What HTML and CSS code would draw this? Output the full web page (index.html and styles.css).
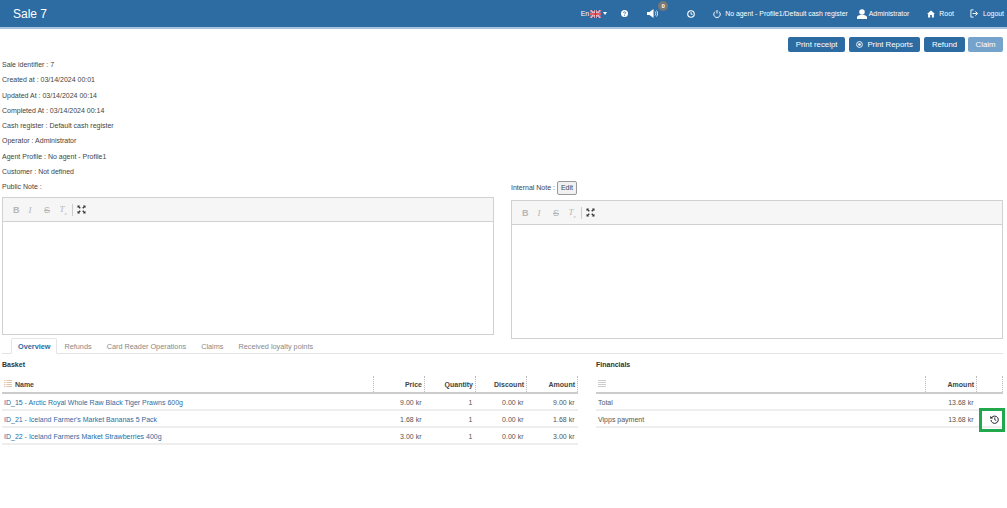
FILE: index.html
```html
<!DOCTYPE html>
<html>
<head>
  <meta charset="utf-8">
  <title>Sale 7</title>
  <link rel="stylesheet" href="styles.css">
</head>
<body>
  <div class="topbar">
    <div class="title">Sale 7</div>
    <div class="topnav">
      <span class="nav-lang">En
        <svg class="flag" width="11" height="8" viewBox="0 0 22 16"><rect width="22" height="16" fill="#2b3f8c"/><path d="M0 0L22 16M22 0L0 16" stroke="#fff" stroke-width="3.5"/><path d="M0 0L22 16M22 0L0 16" stroke="#d3263a" stroke-width="1.4"/><path d="M11 0V16M0 8H22" stroke="#fff" stroke-width="5"/><path d="M11 0V16M0 8H22" stroke="#d3263a" stroke-width="3"/></svg>
        <span class="caret"></span>
      </span>
      <svg class="nav-help" width="7" height="7" viewBox="0 0 16 16"><circle cx="8" cy="8" r="8" fill="#fff"/><path d="M5.2 6.2C5.4 3.6 10.8 3.600 10.8 6.400C10.8 8.2 8 8 8 10" fill="none" stroke="#2d6ca2" stroke-width="2"/><rect x="7" y="11" width="2" height="2" fill="#2d6ca2"/></svg>
      <span class="nav-sound">
        <svg width="11" height="9" viewBox="0 0 22 18"><path d="M0 6H5L13 0V18L5 12H0Z" fill="#fff"/><path d="M16 5C18 7 18 11 16 13M19 3C22 6 22 12 19 15" fill="none" stroke="#fff" stroke-width="1.6"/></svg>
        <span class="badge">0</span>
      </span>
      <svg class="nav-clock" width="8" height="8" viewBox="0 0 18 18"><circle cx="9" cy="9" r="7.4" fill="none" stroke="#fff" stroke-width="2.4"/><path d="M9 4.5V9.5H13" fill="none" stroke="#fff" stroke-width="2"/></svg>
      <span class="nav-item nav-agent">
        <svg width="8" height="8" viewBox="0 0 18 18"><path d="M5 3.5A7.3 7.3 0 1 0 13 3.5" fill="none" stroke="#fff" stroke-width="2.2"/><path d="M9 0V8" stroke="#fff" stroke-width="2.2"/></svg>
        No agent - Profile1/Default cash register
      </span>
      <span class="nav-item nav-user">
        <svg width="10" height="10" viewBox="0 0 20 20"><circle cx="10" cy="6" r="5.5" fill="#fff"/><path d="M0 20V16.5C0 13.5 4 12.5 6 12H14C16 12.5 20 13.5 20 16.5V20Z" fill="#fff"/></svg>
        Administrator
      </span>
      <span class="nav-item nav-root">
        <svg width="8" height="8" viewBox="0 0 18 16"><path d="M9 0L18 8H15.5V16H11V10.5H7V16H2.5V8H0Z" fill="#fff"/></svg>
        Root
      </span>
      <span class="nav-item nav-logout">
        <svg width="9" height="9" viewBox="0 0 20 20"><path d="M8 2H2V18H8" fill="none" stroke="#fff" stroke-width="2"/><path d="M6 10H15M12 5.5L17 10L12 14.500" fill="none" stroke="#fff" stroke-width="2.2"/></svg>
        Logout
      </span>
    </div>
  </div>

  <div class="actions">
    <button class="btn">Print receipt</button>
    <button class="btn btn-reports">
      <svg width="7" height="7" viewBox="0 0 14 14"><circle cx="7" cy="7" r="5.8" fill="none" stroke="#fff" stroke-width="1.8"/><circle cx="7" cy="7" r="2.6" fill="#fff"/></svg>
      Print Reports
    </button>
    <button class="btn">Refund</button>
    <button class="btn btn-disabled">Claim</button>
  </div>

  <div class="info">
    <p>Sale identifier : 7</p>
    <p>Created at : 03/14/2024 00:01</p>
    <p>Updated At : 03/14/2024 00:14</p>
    <p>Completed At : 03/14/2024 00:14</p>
    <p>Cash register : Default cash register</p>
    <p>Operator : Administrator</p>
    <p>Agent Profile : No agent - Profile1</p>
    <p>Customer : Not defined</p>
  </div>

  <div class="notes">
    <div class="note">
      <div class="note-label">Public Note :</div>
      <div class="editor">
        <div class="toolbar">
          <span class="tool tool-b">B</span>
          <span class="tool tool-i">I</span>
          <span class="tool tool-s">S</span>
          <span class="tool tool-x">T<sub>x</sub></span>
          <span class="tool-sep"></span>
          <svg width="9" height="9" viewBox="0 0 18 18"><path d="M1 1H6L4.500 2.500L7.500 5.500L5.500 7.500L2.500 4.500L1 6ZM17 1V6L15.500 4.500L12.500 7.500L10.500 5.500L13.500 2.500L12 1ZM1 17V12L2.500 13.500L5.500 10.500L7.500 12.500L4.500 15.500L6 17ZM17 17H12L13.500 15.500L10.500 12.500L12.500 10.500L15.500 13.500L17 12Z" fill="#333"/></svg>
        </div>
        <div class="editor-body editor-left"></div>
      </div>
    </div>
    <div class="note note-internal">
      <div class="note-label">Internal Note : <button class="btn-edit">Edit</button></div>
      <div class="editor">
        <div class="toolbar">
          <span class="tool tool-b">B</span>
          <span class="tool tool-i">I</span>
          <span class="tool tool-s">S</span>
          <span class="tool tool-x">T<sub>x</sub></span>
          <span class="tool-sep"></span>
          <svg width="9" height="9" viewBox="0 0 18 18"><path d="M1 1H6L4.500 2.500L7.500 5.500L5.500 7.500L2.500 4.500L1 6ZM17 1V6L15.500 4.500L12.500 7.500L10.500 5.500L13.500 2.500L12 1ZM1 17V12L2.500 13.500L5.500 10.500L7.500 12.500L4.500 15.500L6 17ZM17 17H12L13.500 15.500L10.500 12.500L12.500 10.500L15.500 13.500L17 12Z" fill="#333"/></svg>
        </div>
        <div class="editor-body"></div>
      </div>
    </div>
  </div>

  <div class="tabs">
    <span class="tab tab-active">Overview</span>
    <span class="tab">Refunds</span>
    <span class="tab">Card Reader Operations</span>
    <span class="tab">Claims</span>
    <span class="tab">Received loyalty points</span>
  </div>

  <div class="panels">
    <div class="basket">
      <div class="panel-title">Basket</div>
      <table>
        <colgroup><col><col class="c51"><col class="c51"><col class="c51"><col class="c51"></colgroup>
        <thead>
          <tr>
            <th class="left">
              <svg class="list-icon" width="8" height="7" viewBox="0 0 16 14"><path d="M0 1H3M5 1H16M0 5H3M5 5H16M0 9H3M5 9H16M0 13H3M5 13H16" stroke="#d8b08c" stroke-width="1.500"/></svg>
              Name
            </th>
            <th>Price</th><th>Quantity</th><th>Discount</th><th>Amount</th>
          </tr>
        </thead>
        <tbody>
          <tr><td class="left"><a href="#">ID_15 - Arctic Royal Whole Raw Black Tiger Prawns 600g</a></td><td>9.00 kr</td><td>1</td><td>0.00 kr</td><td>9.00 kr</td></tr>
          <tr><td class="left"><a href="#">ID_21 - Iceland Farmer's Market Bananas 5 Pack</a></td><td>1.68 kr</td><td>1</td><td>0.00 kr</td><td>1.68 kr</td></tr>
          <tr><td class="left"><a href="#">ID_22 - Iceland Farmers Market Strawberries 400g</a></td><td>3.00 kr</td><td>1</td><td>0.00 kr</td><td>3.00 kr</td></tr>
        </tbody>
      </table>
    </div>
    <div class="financials">
      <div class="panel-title">Financials</div>
      <table>
        <colgroup><col><col class="c51"><col class="c26"></colgroup>
        <thead>
          <tr>
            <th class="left">
              <svg class="list-icon" width="8" height="7" viewBox="0 0 16 14"><path d="M0 1H16M0 5H16M0 9H16M0 13H16" stroke="#bbb" stroke-width="1.500"/></svg>
            </th>
            <th>Amount</th><th></th>
          </tr>
        </thead>
        <tbody>
          <tr><td class="left">Total</td><td>13.68 kr</td><td></td></tr>
          <tr>
            <td class="left">Vipps payment</td><td>13.68 kr</td>
            <td class="action-cell">
              <span class="highlight"></span>
              <svg width="9" height="9" viewBox="0 0 18 18"><path d="M3.500 5A7.300 7.300 0 1 1 2 10" fill="none" stroke="#222" stroke-width="2"/><path d="M0.500 2L6.500 6.500L0.500 7.500Z" fill="#222"/><path d="M9.500 5V9.500L12.500 11" fill="none" stroke="#222" stroke-width="1.800"/></svg>
            </td>
          </tr>
        </tbody>
      </table>
    </div>
  </div>
</body>
</html>
```
FILE: styles.css
```css
* {
  box-sizing: border-box;
}
body {
  margin: 0;
  font-family: "Liberation Sans", Arial, sans-serif;
  font-size: 7px;
  color: #444;
  background-color: #fff;
}
.topbar {
  height: 29px;
  background-color: #2d6ca2;
  border-bottom: 2px solid #a9c4de;
  color: #fff;
  display: flex;
  align-items: center;
  justify-content: space-between;
  padding: 0 3px 0 13px;
}
.title {
  font-size: 12px;
}
.topnav {
  display: flex;
  align-items: center;
  font-size: 6.900px;
}
.nav-lang {
  display: flex;
  align-items: center;
  gap: 1px;
  margin-right: 14px;
}
.caret {
  border-top: 3px solid #fff;
  border-left: 2.500px solid transparent;
  border-right: 2.500px solid transparent;
  margin-left: 1px;
}
.nav-help {
  margin-right: 19px;
}
.nav-sound {
  position: relative;
  display: flex;
  margin-right: 29px;
}
.badge {
  position: absolute;
  top: -8px;
  left: 11px;
  width: 10px;
  height: 10px;
  line-height: 10px;
  border-radius: 50%;
  background-color: #777;
  font-size: 6px;
  font-weight: bold;
  text-align: center;
}
.nav-clock {
  margin-right: 18px;
}
.nav-item {
  display: flex;
  align-items: center;
}
.nav-item svg {
  margin-right: 4px;
}
.nav-agent {
  margin-right: 9px;
}
.nav-user svg {
  margin-right: 2px;
}
.nav-user {
  margin-right: 18px;
}
.nav-root {
  margin-right: 16px;
}
.actions {
  display: flex;
  justify-content: flex-end;
  gap: 4px;
  padding: 8px 4px 0 0;
}
.btn {
  height: 15px;
  padding: 0 8px;
  border: 0;
  border-radius: 2px;
  background-color: #2d6ca2;
  color: #fff;
  font-family: inherit;
  font-size: 7.800px;
  display: flex;
  align-items: center;
}
.btn-reports {
  padding: 0 7px;
}
.btn-reports svg {
  margin-right: 4px;
}
.btn-disabled {
  background-color: #76a3cb;
  margin-left: -1px;
  padding: 0 7.500px;
}
.info {
  padding: 4px 0 0 2px;
}
.info p {
  margin: 0;
  height: 15.300px;
  line-height: 15.300px;
}
.info p:first-child {
  margin-top: 1px;
}
.notes {
  display: flex;
  justify-content: space-between;
  padding: 0 4px 0 2px;
}
.note {
  width: 492px;
}
.note-label {
  height: 18px;
  line-height: 15px;
}
.note-internal {
  margin-top: 1px;
}
.note-internal .note-label {
  height: 20px;
}
.btn-edit {
  width: 20px;
  height: 14px;
  padding: 0;
  border: 1px solid #999;
  border-radius: 2px;
  background-color: #f1f1f1;
  color: #444;
  font-family: inherit;
  font-size: 7px;
}
.editor {
  border: 1px solid #d1d1d1;
}
.toolbar {
  height: 24px;
  background-color: #f6f6f6;
  border-bottom: 1px solid #d1d1d1;
  display: flex;
  align-items: center;
  padding-left: 10px;
}
.tool {
  width: 15.500px;
  color: #b5b5b5;
  font-size: 9px;
}
.tool-b {
  font-weight: bold;
}
.tool-i, .tool-x {
  font-family: "Liberation Serif", serif;
  font-style: italic;
}
.tool-s {
  text-decoration: line-through;
}
.tool sub {
  font-size: 5px;
}
.tool-sep {
  width: 1px;
  height: 12px;
  background-color: #ccc;
  margin: 0 4px 0 -3px;
}
.editor-body {
  height: 113px;
  background-color: #fff;
}
.editor-left {
  height: 112px;
}
.tabs {
  display: flex;
  height: 16px;
  margin: -1px 4px 0 2px;
  padding-left: 9px;
  border-bottom: 1px solid #e4e4e4;
  font-size: 7.300px;
  color: #888;
}
.tab {
  padding: 4px 7.500px 0;
}
.tab-active {
  color: #2d6ca2;
  font-weight: bold;
  background-color: #fff;
  border: 1px solid #e4e4e4;
  border-bottom: 1px solid #fff;
  border-radius: 2px 2px 0 0;
  height: 16px;
  padding: 3px 5.500px 0 6px;
}
.panels {
  display: flex;
  justify-content: space-between;
  padding: 0 4px 0 2px;
}
.basket {
  width: 576px;
}
.financials {
  width: 407px;
}
.panel-title {
  height: 22px;
  padding-top: 7px;
  font-weight: bold;
  color: #333;
}
table {
  width: 100%;
  border-collapse: collapse;
  table-layout: fixed;
}
.c51 {
  width: 51px;
}
.c26 {
  width: 26px;
}
th {
  height: 17px;
  padding: 0 2px;
  text-align: right;
  font-weight: bold;
  border-right: 1px dotted #bbb;
  border-bottom: 2px solid #ccc;
}
td {
  height: 17px;
  padding: 1px 3px 0 1px;
  text-align: right;
  color: #555;
  border-bottom: 2px solid #eee;
}
.left {
  text-align: left;
  padding-left: 2px;
}
a {
  color: #2d6ca2;
  text-decoration: none;
}
.list-icon {
  margin-right: 1px;
}
.action-cell {
  position: relative;
  text-align: center;
  padding: 2px 0 0 9px;
}
.highlight {
  position: absolute;
  top: -3px;
  left: 2px;
  width: 26px;
  height: 24px;
  border: 3px solid #1fa84c;
}
```
